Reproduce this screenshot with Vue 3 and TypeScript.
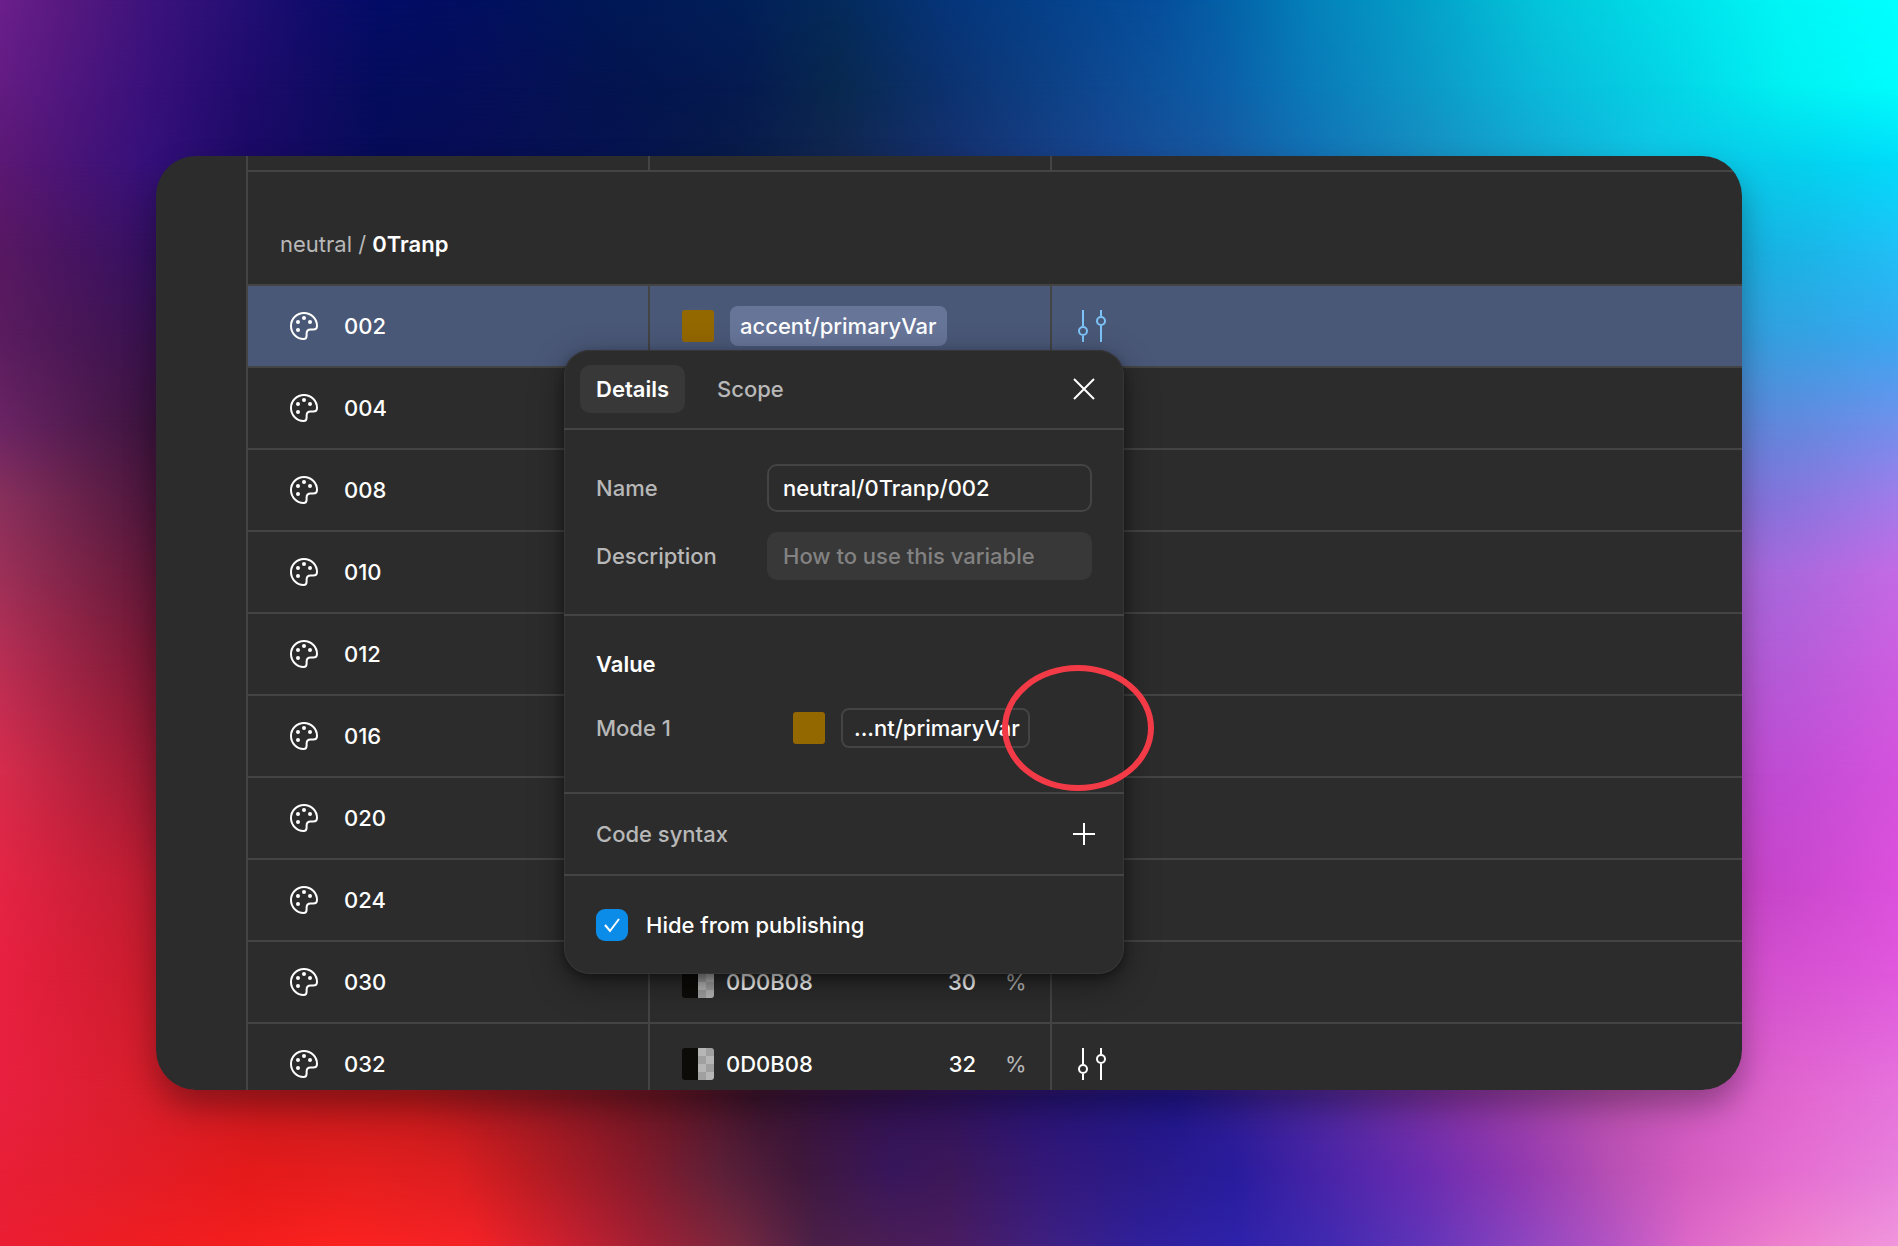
<script setup lang="ts">
interface Variable {
  name: string
  alias?: string
  hex?: string
  opacity?: number
  scoped?: boolean
}

interface MeshRow {
  at: number
  stops: [string, number][]
}

const variables: Variable[] = [
  { name: '002', alias: 'accent/primaryVar', scoped: true },
  { name: '004' },
  { name: '008' },
  { name: '010' },
  { name: '012' },
  { name: '016' },
  { name: '020' },
  { name: '024' },
  { name: '030', hex: '0D0B08', opacity: 30 },
  { name: '032', hex: '0D0B08', opacity: 32, scoped: true },
]

// Wallpaper: horizontal gradients, each faded in from the height of the one before.
const mesh: MeshRow[] = [
  { at: 0, stops: [['#6b1f8c', 0], ['#5a1a80', 3], ['#3c137c', 8], ['#230f74', 13], ['#120c6c', 16], ['#030c66', 20], ['#020f60', 25], ['#011757', 31], ['#021f58', 39], ['#042a5a', 44], ['#06357a', 50], ['#054088', 55], ['#064e9c', 61], ['#0464a8', 65], ['#0480ba', 69], ['#04a0c8', 75], ['#04c4da', 81], ['#00e0ea', 88], ['#00f6f6', 94], ['#00ffff', 100]] },
  { at: 7, stops: [['#631c82', 0], ['#38107a', 8], ['#1f0b6c', 13], ['#040c5c', 20], ['#060e5a', 25], ['#03144e', 33], ['#051a50', 39], ['#08284e', 44], ['#0c3270', 50], ['#0e4890', 58], ['#0c5ca6', 64], ['#0a7ab8', 69], ['#0c98c6', 75], ['#0ab8d8', 81], ['#04d4e6', 88], ['#00f0f2', 94], ['#00fdfd', 100]] },
  { at: 13, stops: [['#5c1874', 0], ['#34107a', 8], ['#1c0a66', 13], ['#060c58', 20], ['#080e54', 25], ['#061450', 33], ['#081a48', 38], ['#122650', 44], ['#16306e', 50], ['#184690', 58], ['#1858a0', 64], ['#1470b4', 69], ['#188cc0', 75], ['#14a8d2', 81], ['#10c4e4', 87], ['#04d0ec', 94], ['#00dcfa', 100]] },
  { at: 20, stops: [['#581862', 0], ['#341062', 8], ['#18b4e4', 94], ['#20c0f6', 100]] },
  { at: 27, stops: [['#5a1c5e', 0], ['#38124e', 8], ['#34a0e0', 94], ['#38a8f0', 100]] },
  { at: 34, stops: [['#6a2464', 0], ['#3c143e', 8], ['#6088dc', 94], ['#7090ec', 100]] },
  { at: 40, stops: [['#88305c', 0], ['#4c163c', 8], ['#8474dc', 94], ['#a07cea', 100]] },
  { at: 46, stops: [['#9c3058', 0], ['#601838', 8], ['#a868dc', 94], ['#c46ae4', 100]] },
  { at: 53, stops: [['#b82e54', 0], ['#781834', 8], ['#b45cd8', 94], ['#cc5ee0', 100]] },
  { at: 62, stops: [['#d62c4c', 0], ['#981a32', 8], ['#c04cd4', 94], ['#d452dc', 100]] },
  { at: 71, stops: [['#e42444', 0], ['#bc1c30', 8], ['#c846cc', 94], ['#dc50dc', 100]] },
  { at: 78, stops: [['#e82040', 0], ['#c81c2c', 8], ['#d450d0', 94], ['#e058dc', 100]] },
  { at: 88, stops: [['#e82040', 0], ['#d81e2a', 8], ['#c81a1e', 14], ['#c01a1c', 22], ['#9c1822', 28], ['#681624', 35], ['#3c142e', 40], ['#341248', 45], ['#30125c', 50], ['#281474', 55], ['#20168c', 62], ['#50289c', 70], ['#8834a4', 77], ['#bc50b0', 85], ['#d45cc4', 90], ['#e268d0', 95], ['#e674dc', 100]] },
  { at: 94, stops: [['#e81f36', 0], ['#e21e2c', 6], ['#e41a1a', 13], ['#e41e1e', 19], ['#dc1e20', 24], ['#b81c22', 28], ['#8c1a2a', 33], ['#5c2038', 38], ['#40183a', 42], ['#38165c', 47], ['#3c1858', 50], ['#341878', 55], ['#2a1a88', 60], ['#281c9c', 65], ['#4a24a8', 70], ['#6a2cb0', 75], ['#9038b0', 80], ['#b850b4', 85], ['#d45cc0', 89], ['#e46cd0', 94], ['#e880dc', 100]] },
  { at: 100, stops: [['#ea1e34', 0], ['#ee1e22', 7], ['#f41e1e', 13], ['#fa2220', 18], ['#f42226', 25], ['#c82030', 30], ['#a02034', 34], ['#742840', 39], ['#4a2048', 43], ['#4a1c60', 50], ['#3e2080', 55], ['#30209a', 60], ['#2e22aa', 65], ['#402ab0', 70], ['#6034b8', 75], ['#8a44c0', 80], ['#b454c4', 85], ['#dc68c8', 89], ['#ee80cc', 94], ['#f096dc', 100]] },
]

function meshStyle(row: MeshRow, index: number) {
  const colours = row.stops.map(([colour, x]) => `${colour} ${x}%`).join(', ')
  const style: Record<string, string> = { backgroundImage: `linear-gradient(to right, ${colours})` }
  if (index > 0) {
    style.maskImage = `linear-gradient(to bottom, transparent ${mesh[index - 1].at}%, black ${row.at}%)`
  }
  return style
}
</script>

<template>
  <div class="stage">
    <div class="wallpaper" aria-hidden="true">
      <div v-for="(row, i) in mesh" :key="row.at" class="mesh" :style="meshStyle(row, i)"></div>
    </div>

    <main class="window">
      <div class="sidebar"></div>
      <table class="variables">
        <colgroup>
          <col class="col-name" />
          <col class="col-value" />
          <col />
        </colgroup>
        <tbody>
          <tr class="previous">
            <td></td>
            <td></td>
            <td></td>
          </tr>
          <tr class="group">
            <th colspan="3" scope="rowgroup">neutral / <strong>0Tranp</strong></th>
          </tr>
          <tr v-for="(item, i) in variables" :key="item.name" class="variable" :class="{ selected: i === 0 }">
            <td>
              <div class="cell name-cell">
                <svg class="palette" viewBox="0 0 28 28" aria-hidden="true">
                  <path
                    d="M14 1C6.800 1 1 6.800 1 14s5.800 13 12.600 13c2 0 3-1.200 3-3.200v-2.300c0-2.700 1.300-4 4-4h2.600c2.500 0 3.800-1.300 3.800-3.500C27 6.800 21.200 1 14 1z"
                    fill="none"
                    stroke="currentColor"
                    stroke-width="2"
                  />
                  <circle cx="14" cy="6" r="2" />
                  <circle cx="8" cy="10" r="2" />
                  <circle cx="20" cy="10" r="2" />
                  <circle cx="8" cy="18" r="2" />
                </svg>
                <span>{{ item.name }}</span>
              </div>
            </td>
            <td>
              <div v-if="item.alias" class="cell alias-cell">
                <span class="swatch"></span>
                <span class="pill">{{ item.alias }}</span>
              </div>
              <div v-else-if="item.hex" class="cell hex-cell">
                <span class="swatch translucent"></span>
                <span class="hex">{{ item.hex }}</span>
                <span>{{ item.opacity }}</span>
                <span class="percent">%</span>
              </div>
            </td>
            <td>
              <div v-if="item.scoped" class="cell scope-cell">
                <svg class="sliders" viewBox="0 0 28 32" fill="none" stroke="currentColor" stroke-width="2" aria-hidden="true">
                  <path d="M5 0v16M5 26v6M23 0v6M23 16v16" />
                  <circle cx="5" cy="21" r="4" />
                  <circle cx="23" cy="11" r="4" />
                </svg>
              </div>
            </td>
          </tr>
        </tbody>
      </table>
    </main>

    <section class="popover" role="dialog" aria-label="Variable details">
      <header class="tabs">
        <button type="button" class="tab active">Details</button>
        <button type="button" class="tab">Scope</button>
        <button type="button" class="icon-button" aria-label="Close">
          <svg viewBox="0 0 22 22" aria-hidden="true"><path d="M1 1l20 20M21 1L1 21" /></svg>
        </button>
      </header>

      <form class="fields">
        <label for="variable-name">Name</label>
        <input id="variable-name" type="text" value="neutral/0Tranp/002" />
        <label for="variable-description">Description</label>
        <input id="variable-description" class="filled" type="text" placeholder="How to use this variable" />
      </form>

      <div class="value">
        <h2>Value</h2>
        <div class="mode">
          <span class="mode-name">Mode 1</span>
          <span class="swatch"></span>
          <button type="button" class="alias">...nt/primaryVar</button>
        </div>
      </div>

      <div class="syntax">
        <span>Code syntax</span>
        <button type="button" class="icon-button" aria-label="Add code syntax">
          <svg viewBox="0 0 22 22" aria-hidden="true"><path d="M11 0v22M0 11h22" /></svg>
        </button>
      </div>

      <div class="publishing">
        <input id="hide" type="checkbox" checked />
        <label for="hide">Hide from publishing</label>
      </div>

      <div class="marker" aria-hidden="true"></div>
    </section>
  </div>
</template>

<style>
body {
  margin: 0;
  background: #0a0a40;
}
</style>

<style scoped>
* {
  box-sizing: border-box;
}

.stage {
  --surface: #2c2c2c;
  --line: #444444;
  --muted: #b8b8b8;
  position: relative;
  padding: 156px;
  overflow: hidden;
  color: #ffffff;
  font-family: Inter, 'Liberation Sans', sans-serif;
  font-size: 22px;
  font-weight: 500;
  line-height: 32px;
}

.wallpaper,
.mesh {
  position: absolute;
  inset: 0;
}

.stage::before {
  content: '';
  position: absolute;
  z-index: 1;
  inset: 156px;
  border-radius: 40px;
  box-shadow: 0 16px 32px rgba(0, 0, 0, 0.32);
}

.window {
  position: relative;
  z-index: 2;
  display: flex;
  max-height: calc(100vh - 312px);
  overflow: hidden;
  border-radius: 40px;
  background: var(--surface);
}

.sidebar {
  flex: none;
  width: 92px;
  border-right: 2px solid var(--line);
}

.variables {
  flex: 1;
  table-layout: fixed;
  width: 100%;
  border-collapse: separate;
  border-spacing: 0;
}

.col-name,
.col-value {
  width: 402px;
}

td,
th {
  padding: 0;
  border-bottom: 2px solid var(--line);
  text-align: left;
}

td:not(:last-child) {
  border-right: 2px solid var(--line);
}

.previous td {
  height: 16px;
}

.group th {
  height: 114px;
  padding: 32px 32px 0;
  color: var(--muted);
  font-weight: 400;
}

.group strong {
  color: #ffffff;
  font-weight: 600;
}

.variable td {
  height: 82px;
}

.selected td {
  background: #4a5878;
}

.cell {
  display: flex;
  align-items: center;
}

.name-cell {
  gap: 26px;
  padding-left: 42px;
}

.name-cell,
.pill,
.alias,
.publishing {
  font-weight: 450;
}

.palette {
  width: 28px;
  height: 28px;
  fill: currentColor;
}

.alias-cell {
  gap: 16px;
  padding-left: 32px;
}

.swatch {
  flex: none;
  width: 32px;
  height: 32px;
  border-radius: 3px;
  background: #946800;
}

.pill {
  padding: 4px 10px;
  border-radius: 8px;
  background: #677599;
}

.hex-cell {
  padding: 0 26px 0 32px;
}

.translucent {
  background:
    linear-gradient(to right, #0d0b08 50%, transparent 50%),
    conic-gradient(#a0a0a0 25%, #b6b6b6 0 50%, #a0a0a0 0 75%, #b6b6b6 0) 0 0 / 16px 16px;
}

.hex {
  flex: 1;
  padding-left: 12px;
}

.percent {
  width: 48px;
  padding-left: 29px;
  color: var(--muted);
  font-weight: 400;
}

.scope-cell {
  padding-left: 26px;
}

.sliders {
  width: 28px;
  height: 32px;
}

.selected .sliders {
  color: #7cc4f8;
}

.popover {
  position: absolute;
  z-index: 3;
  top: 350px;
  left: 564px;
  width: 560px;
  border-radius: 26px;
  background: var(--surface);
  box-shadow:
    inset 0 0 0 1px #363636,
    0 4px 10px rgba(0, 0, 0, 0.35),
    0 10px 34px rgba(0, 0, 0, 0.4);
}

button {
  border: 0;
  padding: 0;
  background: transparent;
  color: inherit;
  font: inherit;
}

.tabs {
  display: flex;
  align-items: center;
  gap: 16px;
  height: 80px;
  padding: 0 28px 0 16px;
  border-bottom: 2px solid var(--line);
}

.tab {
  height: 48px;
  padding: 0 16px;
  border-radius: 10px;
  color: var(--muted);
}

.tab.active {
  background: #383838;
  color: #ffffff;
  font-weight: 600;
}

.icon-button {
  display: grid;
  place-items: center;
  width: 24px;
  height: 24px;
  margin-left: auto;
}

.icon-button svg {
  width: 22px;
  height: 22px;
  fill: none;
  stroke: #ffffff;
  stroke-width: 2;
}

.fields {
  display: grid;
  grid-template-columns: 171px 1fr;
  align-items: center;
  row-gap: 20px;
  padding: 34px 32px;
  border-bottom: 2px solid var(--line);
  color: var(--muted);
}

.fields input {
  width: 100%;
  height: 48px;
  padding: 0 14px;
  border: 2px solid var(--line);
  border-radius: 10px;
  outline: 0;
  background: transparent;
  color: #ffffff;
  font: inherit;
}

.fields .filled {
  border-color: #383838;
  background: #383838;
}

.fields input::placeholder {
  color: #828282;
  opacity: 1;
}

.value {
  padding: 32px 32px 44px;
  border-bottom: 2px solid var(--line);
}

.value h2 {
  margin: 0;
  font-size: 22px;
  font-weight: 600;
}

.mode {
  display: flex;
  align-items: center;
  gap: 16px;
  margin-top: 28px;
}

.mode-name {
  width: 181px;
  color: var(--muted);
}

.alias {
  height: 40px;
  padding: 0 8px 0 11px;
  border: 2px solid var(--line);
  border-radius: 8px;
}

.syntax {
  display: flex;
  align-items: center;
  height: 82px;
  padding: 0 28px 0 32px;
  border-bottom: 2px solid var(--line);
  color: var(--muted);
}

.publishing {
  display: flex;
  align-items: center;
  gap: 18px;
  height: 98px;
  padding: 0 32px;
}

.publishing input {
  appearance: none;
  width: 32px;
  height: 32px;
  margin: 0;
  border-radius: 9px;
  background: #0c8ce9 url("data:image/svg+xml,%3Csvg xmlns='http://www.w3.org/2000/svg' viewBox='0 0 32 32'%3E%3Cpath d='M9 16l5 6L23 10' fill='none' stroke='white' stroke-width='2'/%3E%3C/svg%3E");
}

.marker {
  position: absolute;
  top: 315px;
  left: 438px;
  width: 152px;
  height: 126px;
  border: 6px solid #f33a47;
  border-radius: 50%;
}
</style>
